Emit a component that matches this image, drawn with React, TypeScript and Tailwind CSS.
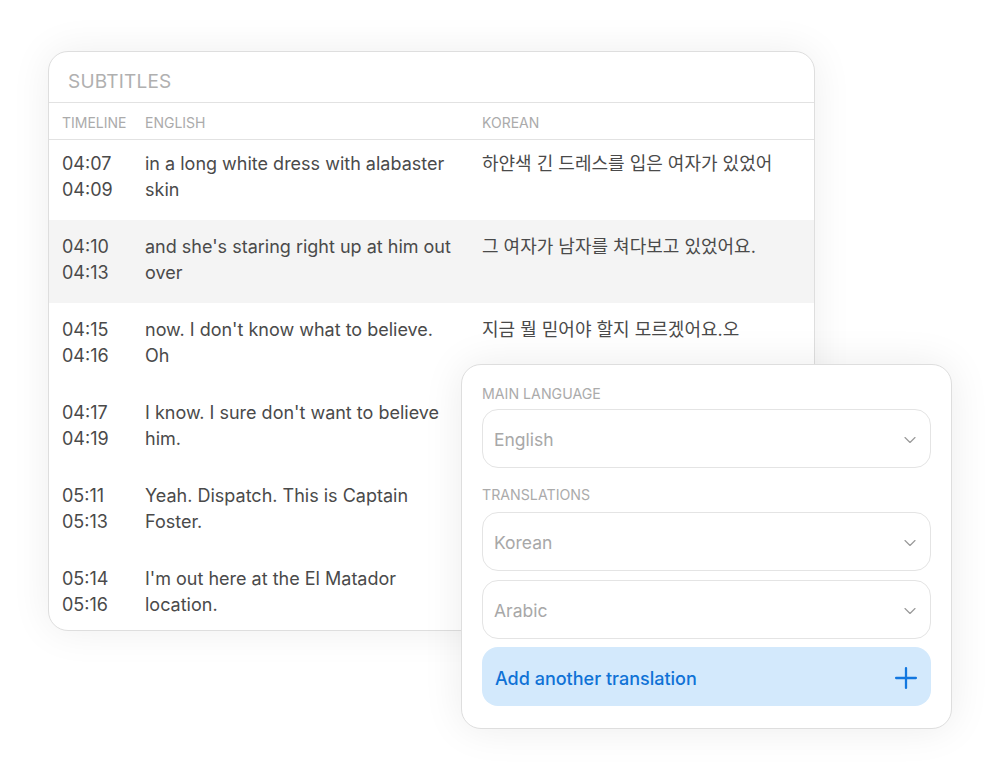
import { ChevronDown, Plus } from 'lucide-react'

const rows = [
  { start: '04:07', end: '04:09', en: 'in a long white dress with alabaster skin', ko: '하얀색 긴 드레스를 입은 여자가 있었어' },
  { start: '04:10', end: '04:13', en: "and she's staring right up at him out over", ko: '그 여자가 남자를 쳐다보고 있었어요.' },
  { start: '04:15', end: '04:16', en: "now. I don't know what to believe. Oh", ko: '지금 뭘 믿어야 할지 모르겠어요.오' },
  { start: '04:17', end: '04:19', en: "I know. I sure don't want to believe him.", ko: '' },
  { start: '05:11', end: '05:13', en: 'Yeah. Dispatch. This is Captain Foster.', ko: '' },
  { start: '05:14', end: '05:16', en: "I'm out here at the El Matador location.", ko: '' },
]

function Select({ value }: { value: string }) {
  return (
    <div className="h-[59px] rounded-[16px] border border-[#e4e4e4] bg-white flex items-center justify-between pt-[3px] pl-[11px] pr-[10px]">
      <span className="text-[17.5px] text-[#a8a8a8]">{value}</span>
      <ChevronDown size={20} strokeWidth={1.4} className="text-[#9a9a9a]" />
    </div>
  )
}

export default function App() {
  return (
    <div
      className="relative w-[1000px] h-[779px] bg-white overflow-hidden"
      style={{ fontFamily: 'Inter, "Noto Sans CJK KR", sans-serif' }}
    >
      <div className="pl-[48px] pt-[51px]">
        <div className="w-[767px] h-[580px] rounded-[20px] border border-[#dedede] bg-white overflow-hidden shadow-[0_0_40px_rgba(0,0,0,0.07)]">
          <div className="h-[51px] flex items-center pt-[10px] px-[19px] border-b border-[#e2e2e2]">
            <span className="text-[19px] text-[#b0b0b0] tracking-[0.2px]">SUBTITLES</span>
          </div>
          <div className="h-[37px] flex items-center pt-[3px] pl-[13px] border-b border-[#e2e2e2] text-[14px] text-[#ababab]">
            <div className="w-[83px]">TIMELINE</div>
            <div className="w-[337px]">ENGLISH</div>
            <div>KOREAN</div>
          </div>
          {rows.map((r, i) => (
            <div
              key={r.start}
              className={`flex pl-[13px] text-[18px] leading-[26px] text-[#4a4a4a] ${i === 0 ? 'pt-[11px]' : 'pt-[14px]'} pb-[17px] ${i === 1 ? 'bg-[#f4f4f4]' : ''}`}
            >
              <div className="w-[83px] shrink-0">
                <div>{r.start}</div>
                <div>{r.end}</div>
              </div>
              <div className="w-[337px] shrink-0 pr-[25px]">{r.en}</div>
              <div className="flex-1 pr-[20px]">{r.ko}</div>
            </div>
          ))}
        </div>
      </div>

      <div className="absolute left-[461px] top-[364px] w-[491px] h-[365px] rounded-[20px] border border-[#dedede] bg-white shadow-[0_0_40px_rgba(0,0,0,0.08)] px-[20px] pt-[20px]">
        <div className="text-[14.2px] leading-[18px] text-[#ababab]">MAIN LANGUAGE</div>
        <div className="mt-[6px]">
          <Select value="English" />
        </div>
        <div className="mt-[18px] text-[14.2px] leading-[18px] text-[#ababab]">TRANSLATIONS</div>
        <div className="mt-[8px] flex flex-col gap-[9px]">
          <Select value="Korean" />
          <Select value="Arabic" />
          <button className="h-[59px] rounded-[16px] bg-[#d3e9fc] flex items-center justify-between pt-[3px] pl-[13px] pr-[8px] mt-[-1px]">
            <span className="text-[18px] font-medium text-[#0f72d6]">Add another translation</span>
            <Plus size={34} strokeWidth={1.6} className="text-[#1277df]" />
          </button>
        </div>
      </div>
    </div>
  )
}
